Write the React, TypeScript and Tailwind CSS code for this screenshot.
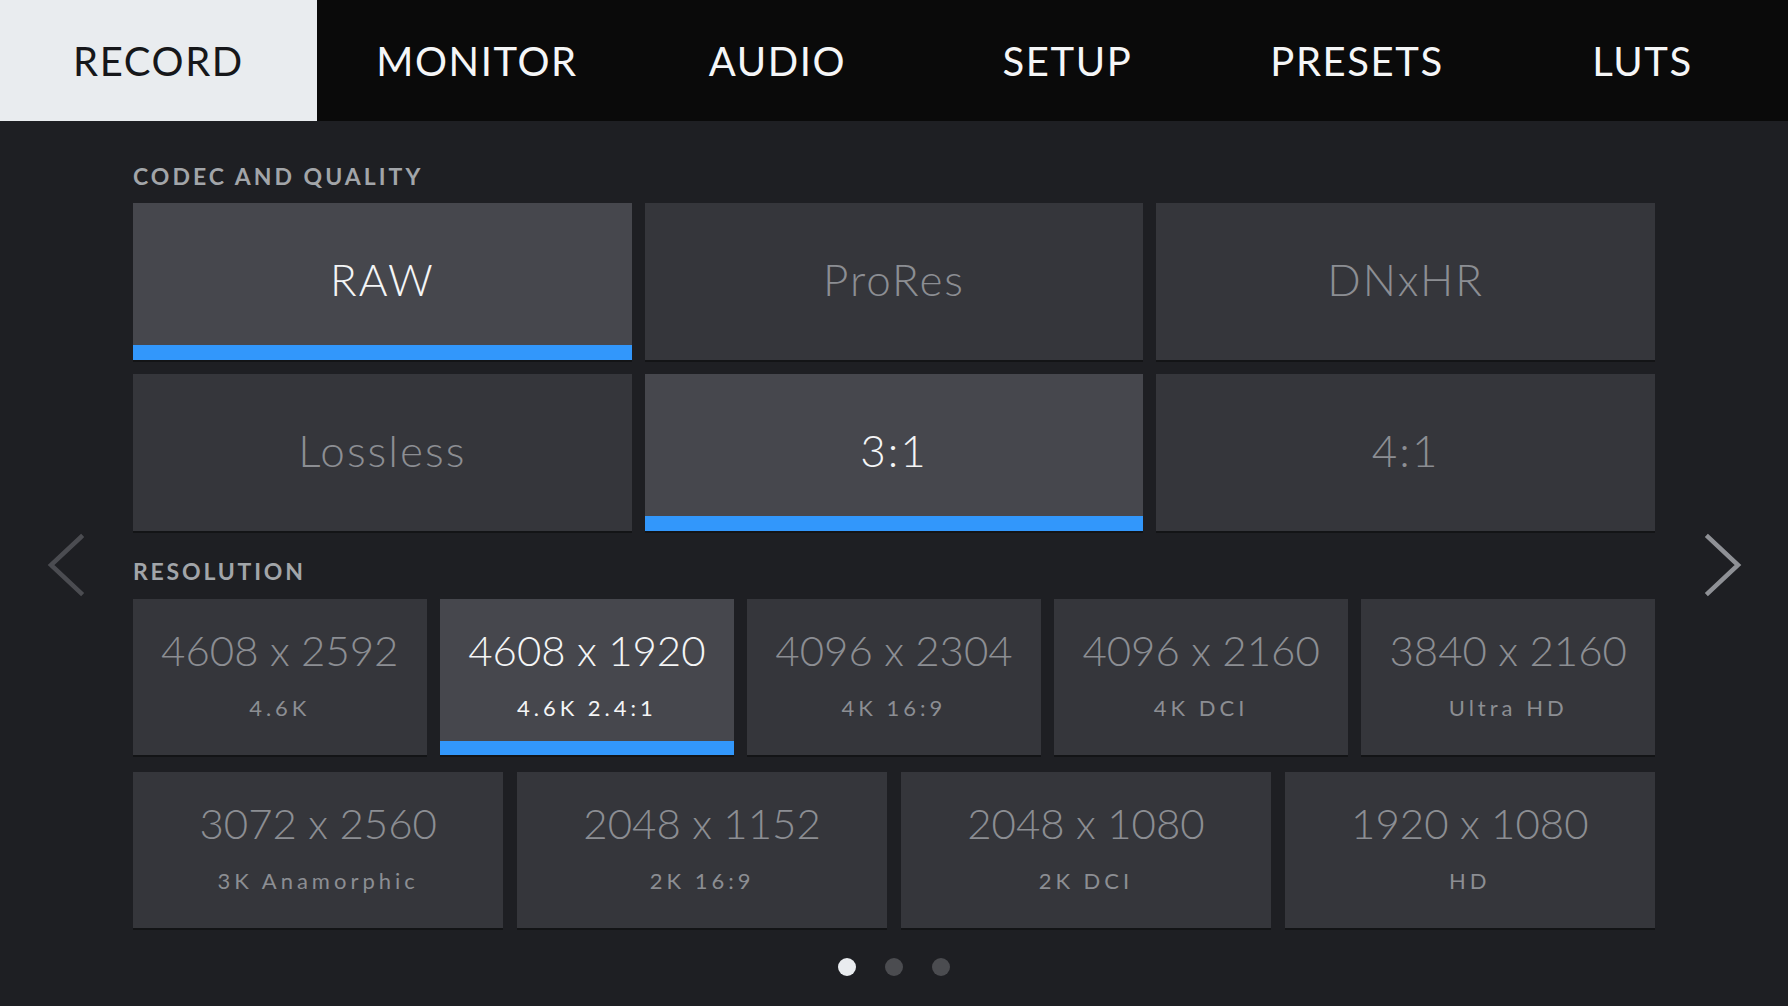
import React from "react";

const tabs = [
  { label: "RECORD", w: "w-[317px]", active: true },
  { label: "MONITOR", w: "w-[320px]" },
  { label: "AUDIO", w: "w-[281px]" },
  { label: "SETUP", w: "w-[299px]" },
  { label: "PRESETS", w: "w-[280px]" },
  { label: "LUTS", w: "w-[291px]" },
];

const codecRows = [
  [
    { t: "RAW", sel: true },
    { t: "ProRes" },
    { t: "DNxHR" },
  ],
  [
    { t: "Lossless" },
    { t: "3:1", sel: true },
    { t: "4:1" },
  ],
];

const res1 = [
  { a: "4608 x 2592", b: "4.6K" },
  { a: "4608 x 1920", b: "4.6K 2.4:1", sel: true },
  { a: "4096 x 2304", b: "4K 16:9" },
  { a: "4096 x 2160", b: "4K DCI" },
  { a: "3840 x 2160", b: "Ultra HD" },
];
const res2 = [
  { a: "3072 x 2560", b: "3K Anamorphic" },
  { a: "2048 x 1152", b: "2K 16:9" },
  { a: "2048 x 1080", b: "2K DCI" },
  { a: "1920 x 1080", b: "HD" },
];

function CodecCard({ t, sel }: { t: string; sel?: boolean }) {
  return (
    <div
      className={`relative h-[157px] flex items-center justify-center shadow-[0_2px_0_rgba(0,0,0,0.35)] ${
        sel ? "bg-[#46474d] text-[#f4f5f6]" : "bg-[#35363b] text-[#8c8e93]"
      }`}
    >
      <span className="text-[44px] leading-none font-light tracking-[2px] pb-[5px]">{t}</span>
      {sel && <div className="absolute left-0 right-0 bottom-0 h-[15px] bg-[#3297fb]" />}
    </div>
  );
}

function ResCard({ a, b, sel }: { a: string; b: string; sel?: boolean }) {
  return (
    <div
      className={`relative h-[156px] flex flex-col items-center justify-center shadow-[0_2px_0_rgba(0,0,0,0.35)] ${
        sel ? "bg-[#46474d] text-[#f4f5f6]" : "bg-[#35363b] text-[#8c8e93]"
      }`}
    >
      <div className="flex flex-col items-center pb-[7px]">
        <span className="text-[42px] leading-none font-light tracking-[0px]">{a}</span>
        <span className="mt-[26px] text-[22px] leading-none font-normal tracking-[4px]">{b}</span>
      </div>
      {sel && <div className="absolute left-0 right-0 bottom-0 h-[14px] bg-[#3297fb]" />}
    </div>
  );
}

function Chevron({ dir, color }: { dir: "l" | "r"; color: string }) {
  return (
    <svg width="40" height="64" viewBox="0 0 40 64">
      <polyline
        points={dir === "l" ? "34,4 4,32 34,60" : "6,4 36,32 6,60"}
        fill="none"
        stroke={color}
        strokeWidth="4.5"
        strokeLinecap="square"
      />
    </svg>
  );
}

export default function App() {
  return (
    <div
      className="w-[1788px] h-[1006px] bg-[#1e1f23] flex flex-col overflow-hidden"
      style={{ fontFamily: "Lato, 'Open Sans', sans-serif" }}
    >
      <div className="h-[121px] bg-[#0a0a0a] flex shrink-0">
        {tabs.map((t) => (
          <div
            key={t.label}
            className={`${t.w} h-full flex items-center justify-center text-[40px] leading-none tracking-[1.6px] ${
              t.active ? "bg-[#e9ecef] text-[#16171a]" : "text-[#f5f6f7]"
            }`}
          >
            <span className="pt-[1px]">{t.label}</span>
          </div>
        ))}
      </div>

      <div className="flex flex-1">
        <div className="w-[133px] flex justify-center pt-[412px]">
          <div className="h-[64px]">
            <Chevron dir="l" color="#4b4c51" />
          </div>
        </div>

        <div className="w-[1522px] flex flex-col pt-[44px]">
          <div className="h-[23px] text-[23px] leading-none font-bold tracking-[3px] text-[#a2a5a9]">
            CODEC AND QUALITY
          </div>
          <div className="mt-[15px] flex flex-col gap-[14px]">
            {codecRows.map((row, i) => (
              <div key={i} className="grid grid-cols-3 gap-[13px]">
                {row.map((c) => (
                  <CodecCard key={c.t} t={c.t} sel={c.sel} />
                ))}
              </div>
            ))}
          </div>

          <div className="mt-[29px] h-[23px] text-[23px] leading-none font-bold tracking-[2.8px] text-[#a2a5a9]">
            RESOLUTION
          </div>
          <div className="mt-[16px] grid grid-cols-5 gap-[13.5px]">
            {res1.map((r) => (
              <ResCard key={r.a} {...r} />
            ))}
          </div>
          <div className="mt-[17px] grid grid-cols-4 gap-[13.5px]">
            {res2.map((r) => (
              <ResCard key={r.a} {...r} />
            ))}
          </div>

          <div className="mt-[30px] flex justify-center gap-[29px]">
            <div className="w-[18px] h-[18px] rounded-full bg-[#e9ecef]" />
            <div className="w-[18px] h-[18px] rounded-full bg-[#4b4c50]" />
            <div className="w-[18px] h-[18px] rounded-full bg-[#4b4c50]" />
          </div>
        </div>

        <div className="w-[133px] flex justify-center pt-[412px]">
          <div className="h-[64px]">
            <Chevron dir="r" color="#8f9196" />
          </div>
        </div>
      </div>
    </div>
  );
}
